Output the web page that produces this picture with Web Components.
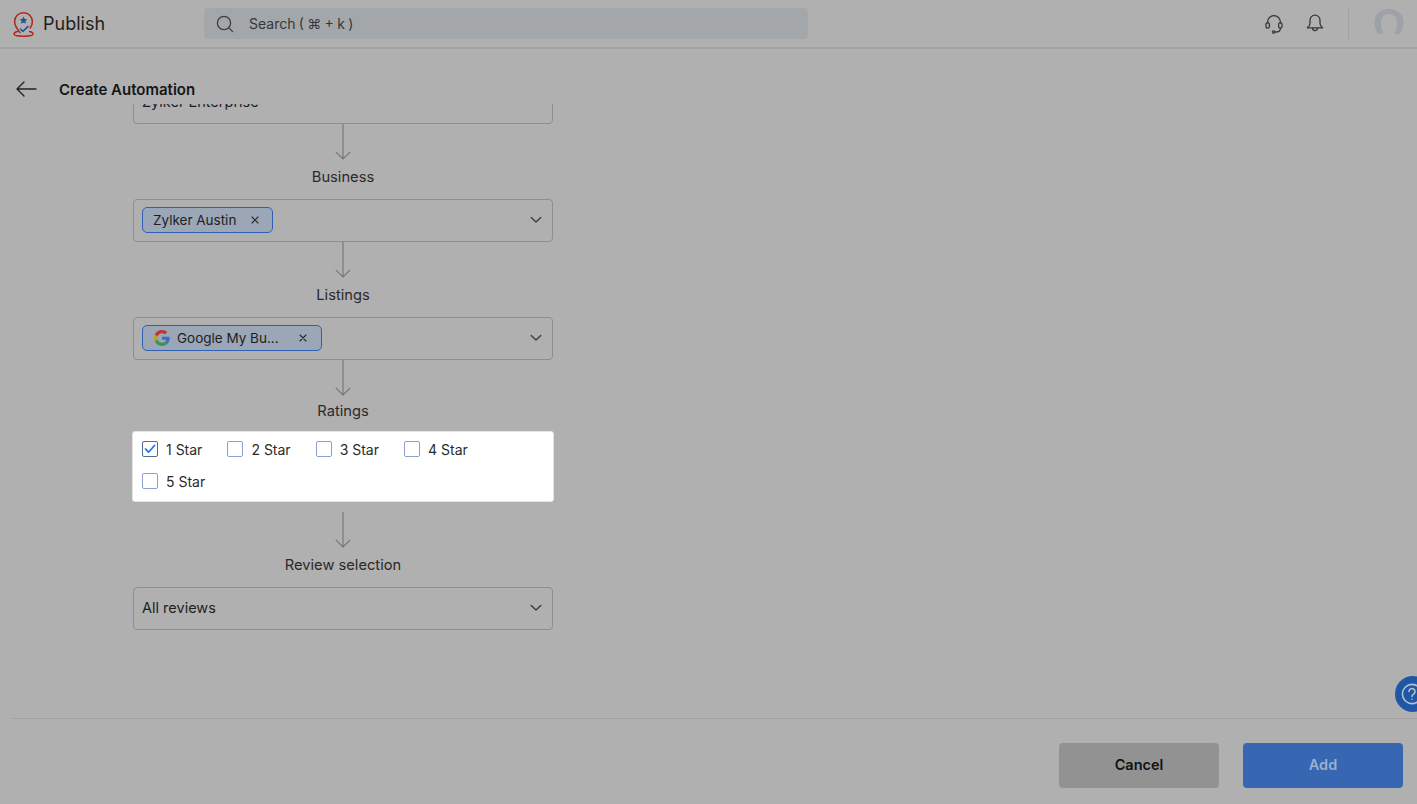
<!DOCTYPE html>
<html lang="en">
<head>
<meta charset="utf-8">
<title>Create Automation</title>
<style>
  html, body { margin: 0; height: 100%; }
  body { background: #b0b0b0; font-family: Inter, "Noto Sans", sans-serif; color: #1c1c1c; overflow: hidden; }
  automation-page { height: 804px; }
</style>
</head>
<body>
<automation-page>
  <app-header slot="header"></app-header>
  <page-title slot="title">Create Automation</page-title>
  <flow-node clipped value="Zylker Enterprise"></flow-node>
  <flow-link label="Business"></flow-link>
  <flow-node><flow-chip>Zylker Austin</flow-chip></flow-node>
  <flow-link label="Listings"></flow-link>
  <flow-node><flow-chip google>Google My Bu...</flow-chip></flow-node>
  <flow-link label="Ratings" short></flow-link>
  <rating-box>
    <star-check checked>1 Star</star-check>
    <star-check>2 Star</star-check>
    <star-check>3 Star</star-check>
    <star-check>4 Star</star-check>
    <star-check>5 Star</star-check>
  </rating-box>
  <flow-link label="Review selection" gap></flow-link>
  <flow-node value="All reviews"></flow-node>
  <page-footer slot="footer"></page-footer>
</automation-page>

<script>
  class AutomationPage extends HTMLElement {
    constructor() {
      super();
      this.attachShadow({ mode: 'open' });
      this.shadowRoot.innerHTML = `
        <style>
          :host { display: flex; flex-direction: column; position: relative; overflow: hidden; }
          .scroll { flex: 1; min-height: 0; overflow: hidden; padding-left: 133px; }
          .column { width: 420px; display: flex; flex-direction: column; margin-top: -23px; }
          .help {
            position: absolute; left: 1395px; top: 676px; width: 36px; height: 36px; border-radius: 50%;
            background: #1f57a4; display: flex; align-items: center; padding-left: 6px; box-sizing: border-box;
          }
        </style>
        <slot name="header"></slot>
        <slot name="title"></slot>
        <div class="scroll"><div class="column"><slot></slot></div></div>
        <slot name="footer"></slot>
        <div class="help">
          <svg width="22" height="22" viewBox="0 0 22 22" fill="none" stroke="#b4bfd0" stroke-width="1.6" stroke-linecap="round">
            <circle cx="11" cy="11" r="9.6"/>
            <path d="M8 8.6a3 3 0 1 1 4.6 2.5c-1 .6-1.6 1.2-1.6 2.3"/>
            <path d="M11 16.2v.1"/>
          </svg>
        </div>
      `;
    }
  }

  class AppHeader extends HTMLElement {
    constructor() {
      super();
      this.attachShadow({ mode: 'open' });
      this.shadowRoot.innerHTML = `
        <style>
          :host { display: flex; align-items: center; height: 47px; border-bottom: 2px solid #a2a2a6; }
          .logo { margin-left: 13px; width: 21px; height: 26px; flex: none; }
          .name { margin-left: 9px; width: 161px; font-size: 18px; color: #1e1e1e; }
          .search {
            width: 604px; height: 31px; border-radius: 4px; background: #a4a7a9; display: flex; align-items: center;
            color: #33373d; font-size: 14px; word-spacing: -0.6px; padding-left: 12px; box-sizing: border-box; gap: 15px;
          }
          .right { margin-left: auto; display: flex; align-items: center; height: 32px; padding-right: 13px; }
          .bell { margin-left: 23px; }
          .rule { width: 1px; height: 32px; background: #a2a2a2; margin: 0 25px 0 24px; }
          .avatar { margin-top: -5px; }
        </style>
        <svg class="logo" viewBox="0 0 21 26" fill="none" stroke-linecap="round" stroke-linejoin="round">
          <path d="M7 21.5 C3.500 17.500 1.600 14.500 1.600 10.600 A8.900 8.900 0 0 1 19.400 10.600 C19.400 13 18.600 15 17.200 17" stroke="#b3221f" stroke-width="1.500"/>
          <path d="M4.500 20.500 C2.500 21 1 22 1 23 C1 24.600 6 25.200 10.500 25.200 C15 25.200 20 24.600 20 23 C20 22 18.600 21 16.500 20.500" stroke="#b3221f" stroke-width="1.500"/>
          <path d="M10.500 5.600l1.200 2.400 2.600.3-1.900 1.800.5 2.600-2.400-1.300-2.400 1.300.5-2.600-1.900-1.800 2.600-.3z" fill="#2b4f93"/>
          <path d="M7.500 18l2.400 2.400 5.200-5" stroke="#2b4f93" stroke-width="1.500"/>
        </svg>
        <div class="name">Publish</div>
        <div class="search">
          <svg width="18" height="18" viewBox="0 0 18 18" fill="none" stroke="#3c3f44" stroke-width="1.300" stroke-linecap="round">
            <circle cx="8" cy="8" r="6.600"/><path d="M13 13l3.600 3.600"/>
          </svg>
          <span>Search ( ⌘ + k )</span>
        </div>
        <div class="right">
          <svg width="18" height="20" viewBox="0 0 18 20" fill="none" stroke="#36383a" stroke-width="1.300" stroke-linecap="round">
            <path d="M2.600 9V8a6.400 6.400 0 0 1 12.800 0v1"/>
            <rect x="1" y="8.600" width="3.400" height="5.600" rx="1.700"/>
            <rect x="13.600" y="8.600" width="3.400" height="5.600" rx="1.700"/>
            <path d="M15.400 14.400c0 2.400-1.800 3.600-5 3.600"/>
            <circle cx="8.600" cy="18" r="1.200"/>
          </svg>
          <svg class="bell" width="18" height="19" viewBox="0 0 18 19" fill="none" stroke="#36383a" stroke-width="1.300" stroke-linecap="round" stroke-linejoin="round">
            <path d="M9 1.200a5 5 0 0 0-5 5v3.200c0 1.600-1 3-2.600 4.400h15.200c-1.600-1.400-2.600-2.800-2.600-4.400V6.200a5 5 0 0 0-5-5z"/>
            <path d="M6.600 14.200a2.400 2.400 0 0 0 4.800 0"/>
          </svg>
          <div class="rule"></div>
          <svg class="avatar" width="30" height="25" viewBox="0 0 30 25" fill="#9ea1a7">
            <path d="M15 0C6.500 0 .5 5.500.5 13c0 4.600 1.300 8.400 3.500 11.500 2 .8 3.800.6 5.400-.5C7.500 20.500 7 17.500 7 14c0-5 3-9 8-9s8 4 8 9c0 3.500-.5 6.500-2.400 10 1.600 1.100 3.400 1.300 5.400.5 2.200-3.100 3.500-6.900 3.500-11.500C29.500 5.500 23.500 0 15 0z"/>
          </svg>
        </div>
      `;
    }
  }

  class PageTitle extends HTMLElement {
    constructor() {
      super();
      this.attachShadow({ mode: 'open' });
      this.shadowRoot.innerHTML = `
        <style>
          :host { display: flex; align-items: center; height: 32px; margin: 24px 0 -1px; padding-left: 16px; gap: 22px; font-size: 15px; font-weight: 600; color: #161616; }
        </style>
        <svg width="21" height="16" viewBox="0 0 21 16" fill="none" stroke="#222" stroke-width="1.400" stroke-linecap="round" stroke-linejoin="round">
          <path d="M20 8H1.200M8 1 1 8l7 7"/>
        </svg>
        <slot></slot>
      `;
    }
  }

  class FlowNode extends HTMLElement {
    constructor() {
      super();
      this.attachShadow({ mode: 'open' });
    }

    connectedCallback() {
      const value = this.getAttribute('value') || '';
      const clipped = this.hasAttribute('clipped');
      this.shadowRoot.innerHTML = `
        <style>
          :host { display: flex; align-items: center; box-sizing: border-box; height: 43px; border: 1px solid #8e8e8e; border-radius: 4px; padding: 0 8px 2px; font-size: 14.500px; color: #1f1f1f; flex: none; }
          svg { margin-left: auto; margin-right: 2px; }
        </style>
        <slot></slot>${value}
        ${clipped ? '' : `<svg width="12" height="8" viewBox="0 0 12 8" fill="none" stroke="#3a3a3a" stroke-width="1.300" stroke-linecap="round" stroke-linejoin="round"><path d="M1.200 1.500 6 6l4.800-4.500"/></svg>`}
      `;
    }
  }

  class FlowChip extends HTMLElement {
    constructor() {
      super();
      this.attachShadow({ mode: 'open' });
    }

    connectedCallback() {
      const google = this.hasAttribute('google');
      this.shadowRoot.innerHTML = `
        <style>
          :host { display: inline-flex; align-items: center; height: 24px; border: 1px solid #2f62b5; border-radius: 5px; background: #9ba6b7; padding: 0 13px 0 10px; font-size: 13.500px; color: #1e1f22; white-space: nowrap; }
          .g { margin-right: 7px; }
          .x { margin-left: 15px; }
          :host([google]) { padding: 0 14px 0 11px; }
          :host([google]) .x { margin-left: 20px; }
        </style>
        ${google ? `<svg class="g" width="16" height="16" viewBox="0 0 48 48">
          <path fill="#b83a2c" d="M24 9.500c3.500 0 6.700 1.200 9.200 3.600l6.900-6.900C35.900 2.400 30.500 0 24 0 14.600 0 6.500 5.400 2.600 13.200l8 6.200C12.400 13.700 17.700 9.500 24 9.500z"/>
          <path fill="#3f6fc0" d="M47 24.600c0-1.600-.2-3.100-.4-4.600H24v9.100h12.900c-.6 3-2.200 5.500-4.700 7.200l7.700 6C44.400 38.100 47 32 47 24.600z"/>
          <path fill="#c99a1e" d="M10.500 28.600A14.500 14.500 0 0 1 9.700 24c0-1.600.3-3.200.8-4.600l-8-6.200A24 24 0 0 0 0 24c0 3.900.9 7.500 2.600 10.800l7.900-6.200z"/>
          <path fill="#3c9350" d="M24 48c6.500 0 11.900-2.100 15.900-5.800l-7.700-6c-2.100 1.400-4.900 2.300-8.200 2.300-6.300 0-11.600-4.200-13.500-10l-7.900 6.200C6.500 42.600 14.600 48 24 48z"/>
        </svg>` : ''}
        <slot></slot>
        <svg class="x" width="8" height="8" viewBox="0 0 8 8" stroke="#2b2b2b" stroke-width="1.100" stroke-linecap="round"><path d="M1 1l6 6M7 1 1 7"/></svg>
      `;
    }
  }

  class FlowLink extends HTMLElement {
    constructor() {
      super();
      this.attachShadow({ mode: 'open' });
    }

    connectedCallback() {
      this.shadowRoot.innerHTML = `
        <style>
          :host { display: flex; flex-direction: column; align-items: center; height: 75px; font-size: 14.700px; color: #2a2a2a; flex: none; }
          :host([gap]) { margin-top: 10px; }
          :host([short]) { height: 71px; }
          :host([short]) .label { margin-top: 5px; }
          svg { flex: none; display: block; }
          .label { margin-top: 7px; line-height: 20px; }
        </style>
        <svg width="16" height="36" viewBox="0 0 16 36" fill="none" stroke="#757575" stroke-width="1.100">
          <path d="M8 0v35M.8 27.800 8 35l7.200-7.200"/>
        </svg>
        <div class="label">${this.getAttribute('label') || ''}</div>
      `;
    }
  }

  class RatingBox extends HTMLElement {
    constructor() {
      super();
      this.attachShadow({ mode: 'open' });
      this.shadowRoot.innerHTML = `
        <style>
          :host { display: flex; flex-wrap: wrap; align-content: flex-start; column-gap: 25px; box-sizing: border-box; height: 71px; margin: 0 -1px; padding: 1px 9px 0; background: #fff; border: 1px solid #e4e4e4; border-radius: 3px; flex: none; }
        </style>
        <slot></slot>
      `;
    }
  }

  class StarCheck extends HTMLElement {
    constructor() {
      super();
      this.attachShadow({ mode: 'open' });
    }

    connectedCallback() {
      this.shadowRoot.innerHTML = `
        <style>
          :host { display: flex; align-items: center; height: 32px; gap: 8px; font-size: 14px; color: #2b2b2b; }
          .box { width: 14px; height: 14px; border: 1px solid #8f9fce; border-radius: 2px; flex: none; display: flex; align-items: center; justify-content: center; }
          :host([checked]) .box { border-color: #56698f; }
        </style>
        <span class="box">${this.hasAttribute('checked') ? `<svg width="12" height="10" viewBox="0 0 12 10" fill="none" stroke="#1b74e8" stroke-width="1.700" stroke-linecap="round" stroke-linejoin="round"><path d="M1.500 5 4.500 8.200 10.500 1.500"/></svg>` : ''}</span>
        <slot></slot>
      `;
    }
  }

  class PageFooter extends HTMLElement {
    constructor() {
      super();
      this.attachShadow({ mode: 'open' });
      this.shadowRoot.innerHTML = `
        <style>
          :host { display: flex; justify-content: flex-end; gap: 24px; margin-left: 11px; height: 86px; box-sizing: border-box; border-top: 1px solid #a3a3a3; padding: 24px 14px 0 0; }
          .btn { width: 160px; height: 45px; box-sizing: border-box; padding-bottom: 3px; border-radius: 4px; display: flex; align-items: center; justify-content: center; font-size: 14.500px; font-weight: 600; }
          .cancel { background: #929292; color: #121212; }
          .add { background: #3766b2; color: #9cb0d0; }
        </style>
        <div class="btn cancel">Cancel</div>
        <div class="btn add">Add</div>
      `;
    }
  }

  customElements.define('automation-page', AutomationPage);
  customElements.define('app-header', AppHeader);
  customElements.define('page-title', PageTitle);
  customElements.define('flow-node', FlowNode);
  customElements.define('flow-chip', FlowChip);
  customElements.define('flow-link', FlowLink);
  customElements.define('rating-box', RatingBox);
  customElements.define('star-check', StarCheck);
  customElements.define('page-footer', PageFooter);
</script>
</body>
</html>
